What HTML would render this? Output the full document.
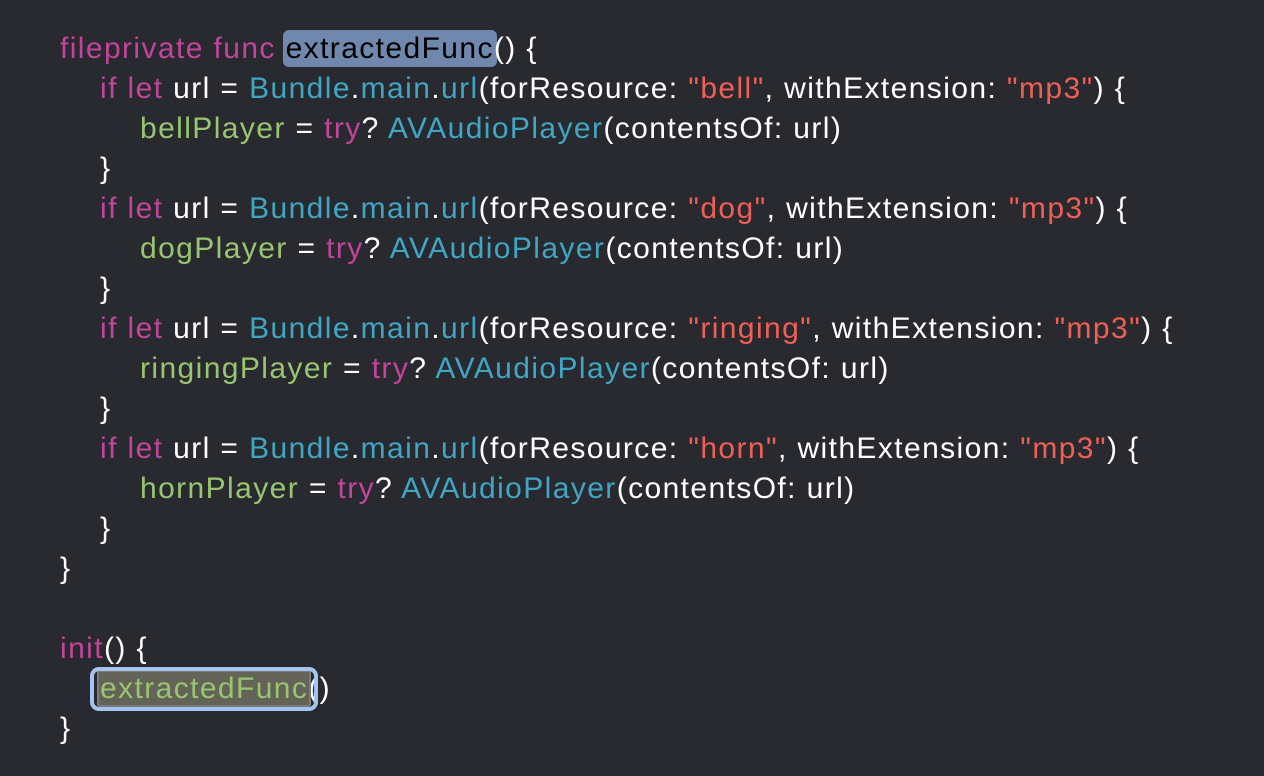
<!DOCTYPE html>
<html><head><meta charset="utf-8"><style>
body{margin:0;width:1264px;height:776px;background:#292a30;overflow:hidden;font-family:"Liberation Sans",sans-serif;font-size:30px;letter-spacing:1.4px;color:#fff}
.l{position:absolute;left:60px;height:40px;line-height:40px;white-space:pre}
.k{color:#c3449c}.t{color:#3fa6c4}.s{color:#ef5f55}.g{color:#98c56f}
.sel{background:#7088ad;color:#000;border-radius:6px;padding:2px 3px;margin:0 -3px}
.box{position:relative;display:inline-block}
.box .hl{position:absolute;left:-10px;top:-2px;right:-10px;bottom:-2px;border:4px solid #a4c4f0;border-radius:9px;}
.box .in{background:#636358;border:2px solid #7b7b7b;border-radius:3px;padding:0 1px;margin:0 -3px}
</style></head><body>
<div class="l" style="top:29px"><span class="k">fileprivate func </span><span class="sel">extractedFunc</span>() {</div>
<div class="l" style="top:69px;left:100px"><span class="k">if let</span> url = <span class="t">Bundle</span>.<span class="t">main</span>.<span class="t">url</span>(forResource: <span class="s">"bell"</span>, withExtension: <span class="s">"mp3"</span>) {</div>
<div class="l" style="top:109px;left:140px"><span class="g">bellPlayer</span> = <span class="k">try</span>? <span class="t">AVAudioPlayer</span>(contentsOf: url)</div>
<div class="l" style="top:149px;left:100px">}</div>
<div class="l" style="top:189px;left:100px"><span class="k">if let</span> url = <span class="t">Bundle</span>.<span class="t">main</span>.<span class="t">url</span>(forResource: <span class="s">"dog"</span>, withExtension: <span class="s">"mp3"</span>) {</div>
<div class="l" style="top:229px;left:140px"><span class="g">dogPlayer</span> = <span class="k">try</span>? <span class="t">AVAudioPlayer</span>(contentsOf: url)</div>
<div class="l" style="top:269px;left:100px">}</div>
<div class="l" style="top:309px;left:100px"><span class="k">if let</span> url = <span class="t">Bundle</span>.<span class="t">main</span>.<span class="t">url</span>(forResource: <span class="s">"ringing"</span>, withExtension: <span class="s">"mp3"</span>) {</div>
<div class="l" style="top:349px;left:140px"><span class="g">ringingPlayer</span> = <span class="k">try</span>? <span class="t">AVAudioPlayer</span>(contentsOf: url)</div>
<div class="l" style="top:389px;left:100px">}</div>
<div class="l" style="top:429px;left:100px"><span class="k">if let</span> url = <span class="t">Bundle</span>.<span class="t">main</span>.<span class="t">url</span>(forResource: <span class="s">"horn"</span>, withExtension: <span class="s">"mp3"</span>) {</div>
<div class="l" style="top:469px;left:140px"><span class="g">hornPlayer</span> = <span class="k">try</span>? <span class="t">AVAudioPlayer</span>(contentsOf: url)</div>
<div class="l" style="top:509px;left:100px">}</div>
<div class="l" style="top:549px">}</div>
<div class="l" style="top:629px"><span class="k">init</span>() {</div>
<div class="l" style="top:669px;left:100px"><span class="box"><span class="hl"></span><span class="in g">extractedFunc</span></span>()</div>
<div class="l" style="top:709px">}</div>
</body></html>
